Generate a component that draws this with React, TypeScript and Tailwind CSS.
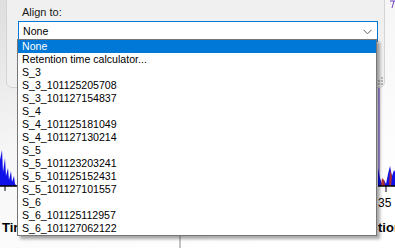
import { useState } from 'react'

const OPTIONS = [
  'None',
  'Retention time calculator...',
  'S_3',
  'S_3_101125205708',
  'S_3_101127154837',
  'S_4',
  'S_4_101125181049',
  'S_4_101127130214',
  'S_5',
  'S_5_101123203241',
  'S_5_101125152431',
  'S_5_101127101557',
  'S_6',
  'S_6_101125112957',
  'S_6_101127062122',
]

// The chart that sits behind the dialog: only its edges peek out.
function ChartBackdrop() {
  return (
    <svg className="absolute inset-0" width={395} height={248} viewBox="0 0 395 248">
      <defs>
        <linearGradient id="fade" x1="0" y1="0" x2="0.6" y2="1">
          <stop offset="0" stopColor="#dedede" />
          <stop offset="0.45" stopColor="#f6f6f6" />
          <stop offset="1" stopColor="#ffffff" />
        </linearGradient>
      </defs>
      <rect x={0} y={0} width={395} height={248} fill="url(#fade)" />
      {/* left trace */}
      <path
        d="M0 186 L0 160 L2 150 L3 172 L5 158 L6 176 L8 168 L9 180 L11 171 L12 182 L14 176 L15 184 L17 186 Z"
        fill="#1010e8"
      />
      <line x1={0} y1={186} x2={18} y2={186} stroke="#000" strokeWidth={1.5} />
      <line x1={5} y1={186} x2={5} y2={191} stroke="#000" />
      {/* right trace */}
      <line x1={379} y1={88} x2={379} y2={186} stroke="#5a2ad0" strokeWidth={1} />
      <path
        d="M378 186 L378 168 L380 178 L382 184 L384 180 L386 184 L388 174 L390 166 L392 176 L394 170 L395 172 L395 186 Z"
        fill="#1010e8"
      />
      <path d="M381 186 L382 178 L384 180 L385 186 Z M389 186 L390 170 L392 176 L391 186 Z" fill="#b03030" />
      <line x1={378} y1={186} x2={395} y2={186} stroke="#000" strokeWidth={1.5} />
      <line x1={386} y1={186} x2={386} y2={192} stroke="#000" />
      <line x1={180} y1={236} x2={180} y2={248} stroke="#8a8a8a" />
      <path d="M390 1 L395 1 M394 1 L392 8" stroke="#7040c0" strokeWidth={1} fill="none" />
    </svg>
  )
}

export default function App() {
  const [selected] = useState(0)

  return (
    <div
      className="relative h-[248px] w-[395px] overflow-hidden bg-white"
      style={{ fontFamily: '"Liberation Sans", Arial, sans-serif' }}
    >
      <ChartBackdrop />

      <span className="absolute left-[2px] top-[220px] text-[13px] font-bold leading-[16px] text-black">Tir</span>
      <span className="absolute left-[378px] top-[196px] text-[12px] leading-[14px] text-black">35</span>
      <span className="absolute left-[378px] top-[220px] text-[13px] font-bold leading-[16px] text-black">tion</span>

      {/* Dialog window */}
      <div className="absolute left-[6px] top-[-6px] h-[94px] w-[379px] rounded-b-[6px] border border-[#d4d4d4] bg-[#f0f0f0]">
        <div className="pl-[15px] pt-[10px] text-[11px] leading-[14px] text-[#1a1a1a]">Align to:</div>
        <div className="ml-[11px] mt-[2px] flex h-[21px] w-[360px] items-center justify-between border border-[#0078d7] bg-white pl-[4px] pr-[5px] text-[10.6px] text-black">
          <span>{OPTIONS[selected]}</span>
          <svg width={9} height={6} viewBox="0 0 9 6">
            <path d="M0.5 0.8 L4.5 4.8 L8.5 0.8" stroke="#606060" strokeWidth={1} fill="none" />
          </svg>
        </div>
        <div className="absolute bottom-[2px] right-[1px] grid grid-cols-3 gap-[1px]">
          <span />
          <span />
          <span className="h-[2px] w-[2px] bg-[#b8b8b8]" />
          <span />
          <span className="h-[2px] w-[2px] bg-[#b8b8b8]" />
          <span className="h-[2px] w-[2px] bg-[#b8b8b8]" />
          <span className="h-[2px] w-[2px] bg-[#b8b8b8]" />
          <span className="h-[2px] w-[2px] bg-[#b8b8b8]" />
          <span className="h-[2px] w-[2px] bg-[#b8b8b8]" />
        </div>
      </div>

      {/* Open dropdown list */}
      <ul className="absolute left-[17px] top-[39px] w-[360px] border border-[#767676] bg-white shadow-[3px_3px_3px_rgba(0,0,0,0.35)]">
        {OPTIONS.map((o, i) => (
          <li
            key={o}
            className={`h-[13px] pl-[4px] text-[10.6px] leading-[13px] ${
              i === selected ? 'bg-[#0078d7] text-white' : 'text-black'
            }`}
          >
            {o}
          </li>
        ))}
      </ul>
    </div>
  )
}
